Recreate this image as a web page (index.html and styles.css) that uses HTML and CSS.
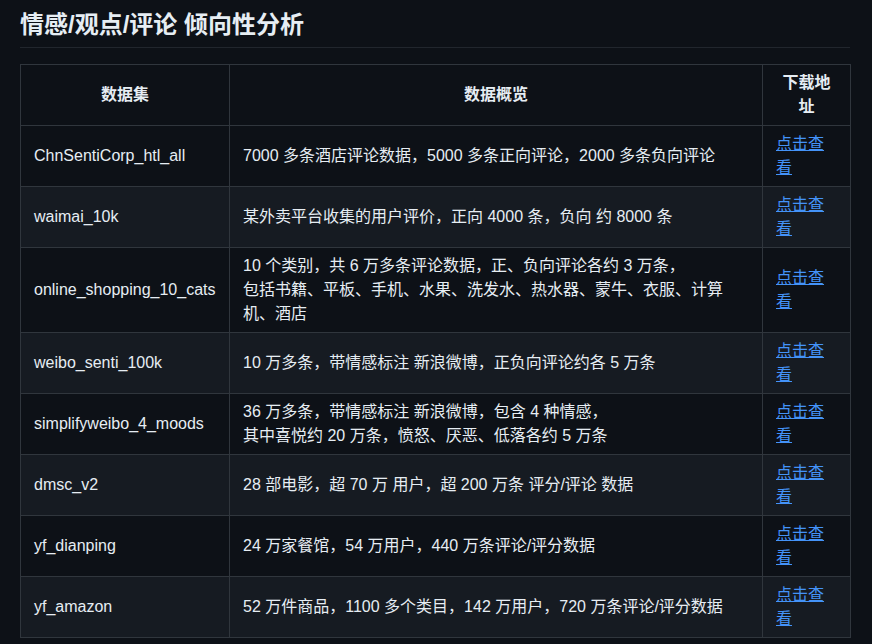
FILE: index.html
```html
<!DOCTYPE html>
<html lang="zh-CN">
<head>
<meta charset="utf-8">
<title>情感/观点/评论 倾向性分析</title>
<link rel="stylesheet" href="styles.css">
</head>
<body>
<main class="markdown">
  <h2 class="title">情感/观点/评论 倾向性分析</h2>
  <table class="data">
    <colgroup>
      <col class="c1">
      <col class="c2">
      <col class="c3">
    </colgroup>
    <thead>
      <tr><th>数据集</th><th>数据概览</th><th>下载地址</th></tr>
    </thead>
    <tbody>
      <tr><td>ChnSentiCorp_htl_all</td><td>7000 多条酒店评论数据，5000 多条正向评论，2000 多条负向评论</td><td><a href="#">点击查看</a></td></tr>
      <tr><td>waimai_10k</td><td>某外卖平台收集的用户评价，正向 4000 条，负向 约 8000 条</td><td><a href="#">点击查看</a></td></tr>
      <tr><td>online_shopping_10_cats</td><td>10 个类别，共 6 万多条评论数据，正、负向评论各约 3 万条，<br>包括书籍、平板、手机、水果、洗发水、热水器、蒙牛、衣服、计算机、酒店</td><td><a href="#">点击查看</a></td></tr>
      <tr><td>weibo_senti_100k</td><td>10 万多条，带情感标注 新浪微博，正负向评论约各 5 万条</td><td><a href="#">点击查看</a></td></tr>
      <tr><td>simplifyweibo_4_moods</td><td>36 万多条，带情感标注 新浪微博，包含 4 种情感，<br>其中喜悦约 20 万条，愤怒、厌恶、低落各约 5 万条</td><td><a href="#">点击查看</a></td></tr>
      <tr><td>dmsc_v2</td><td>28 部电影，超 70 万 用户，超 200 万条 评分/评论 数据</td><td><a href="#">点击查看</a></td></tr>
      <tr><td>yf_dianping</td><td>24 万家餐馆，54 万用户，440 万条评论/评分数据</td><td><a href="#">点击查看</a></td></tr>
      <tr><td>yf_amazon</td><td>52 万件商品，1100 多个类目，142 万用户，720 万条评论/评分数据</td><td><a href="#">点击查看</a></td></tr>
    </tbody>
  </table>
</main>
</body>
</html>
```

FILE: styles.css
```css
html, body {
  margin: 0;
  padding: 0;
  background: #0d1117;
}
body {
  color: #e6edf3;
  font-family: "Liberation Sans", "Noto Sans CJK SC", sans-serif;
  font-size: 16px;
  line-height: 1.5;
}
.markdown {
  width: 830px;
  padding: 10px 22px 0 20px;
}
.title {
  margin: 0 0 16px 0;
  padding-bottom: 7px;
  font-size: 24px;
  font-weight: 700;
  line-height: 1.25;
  border-bottom: 1px solid #21262d;
  color: #e6edf3;
}
.data {
  width: 830px;
  table-layout: fixed;
  border-collapse: collapse;
  border-spacing: 0;
}
.c1 { width: 209px; }
.c2 { width: 533px; }
.c3 { width: 88px; }
.data th, .data td {
  border: 1px solid #30363d;
  padding: 6px 13px;
  vertical-align: middle;
}
.data th {
  font-weight: 700;
  text-align: center;
}
.data td {
  text-align: left;
}
.data tbody tr {
  background: #0d1117;
}
.data tbody tr:nth-child(2n) {
  background: #161b22;
}
.data a {
  color: #4493f8;
  text-decoration: underline;
}
```
